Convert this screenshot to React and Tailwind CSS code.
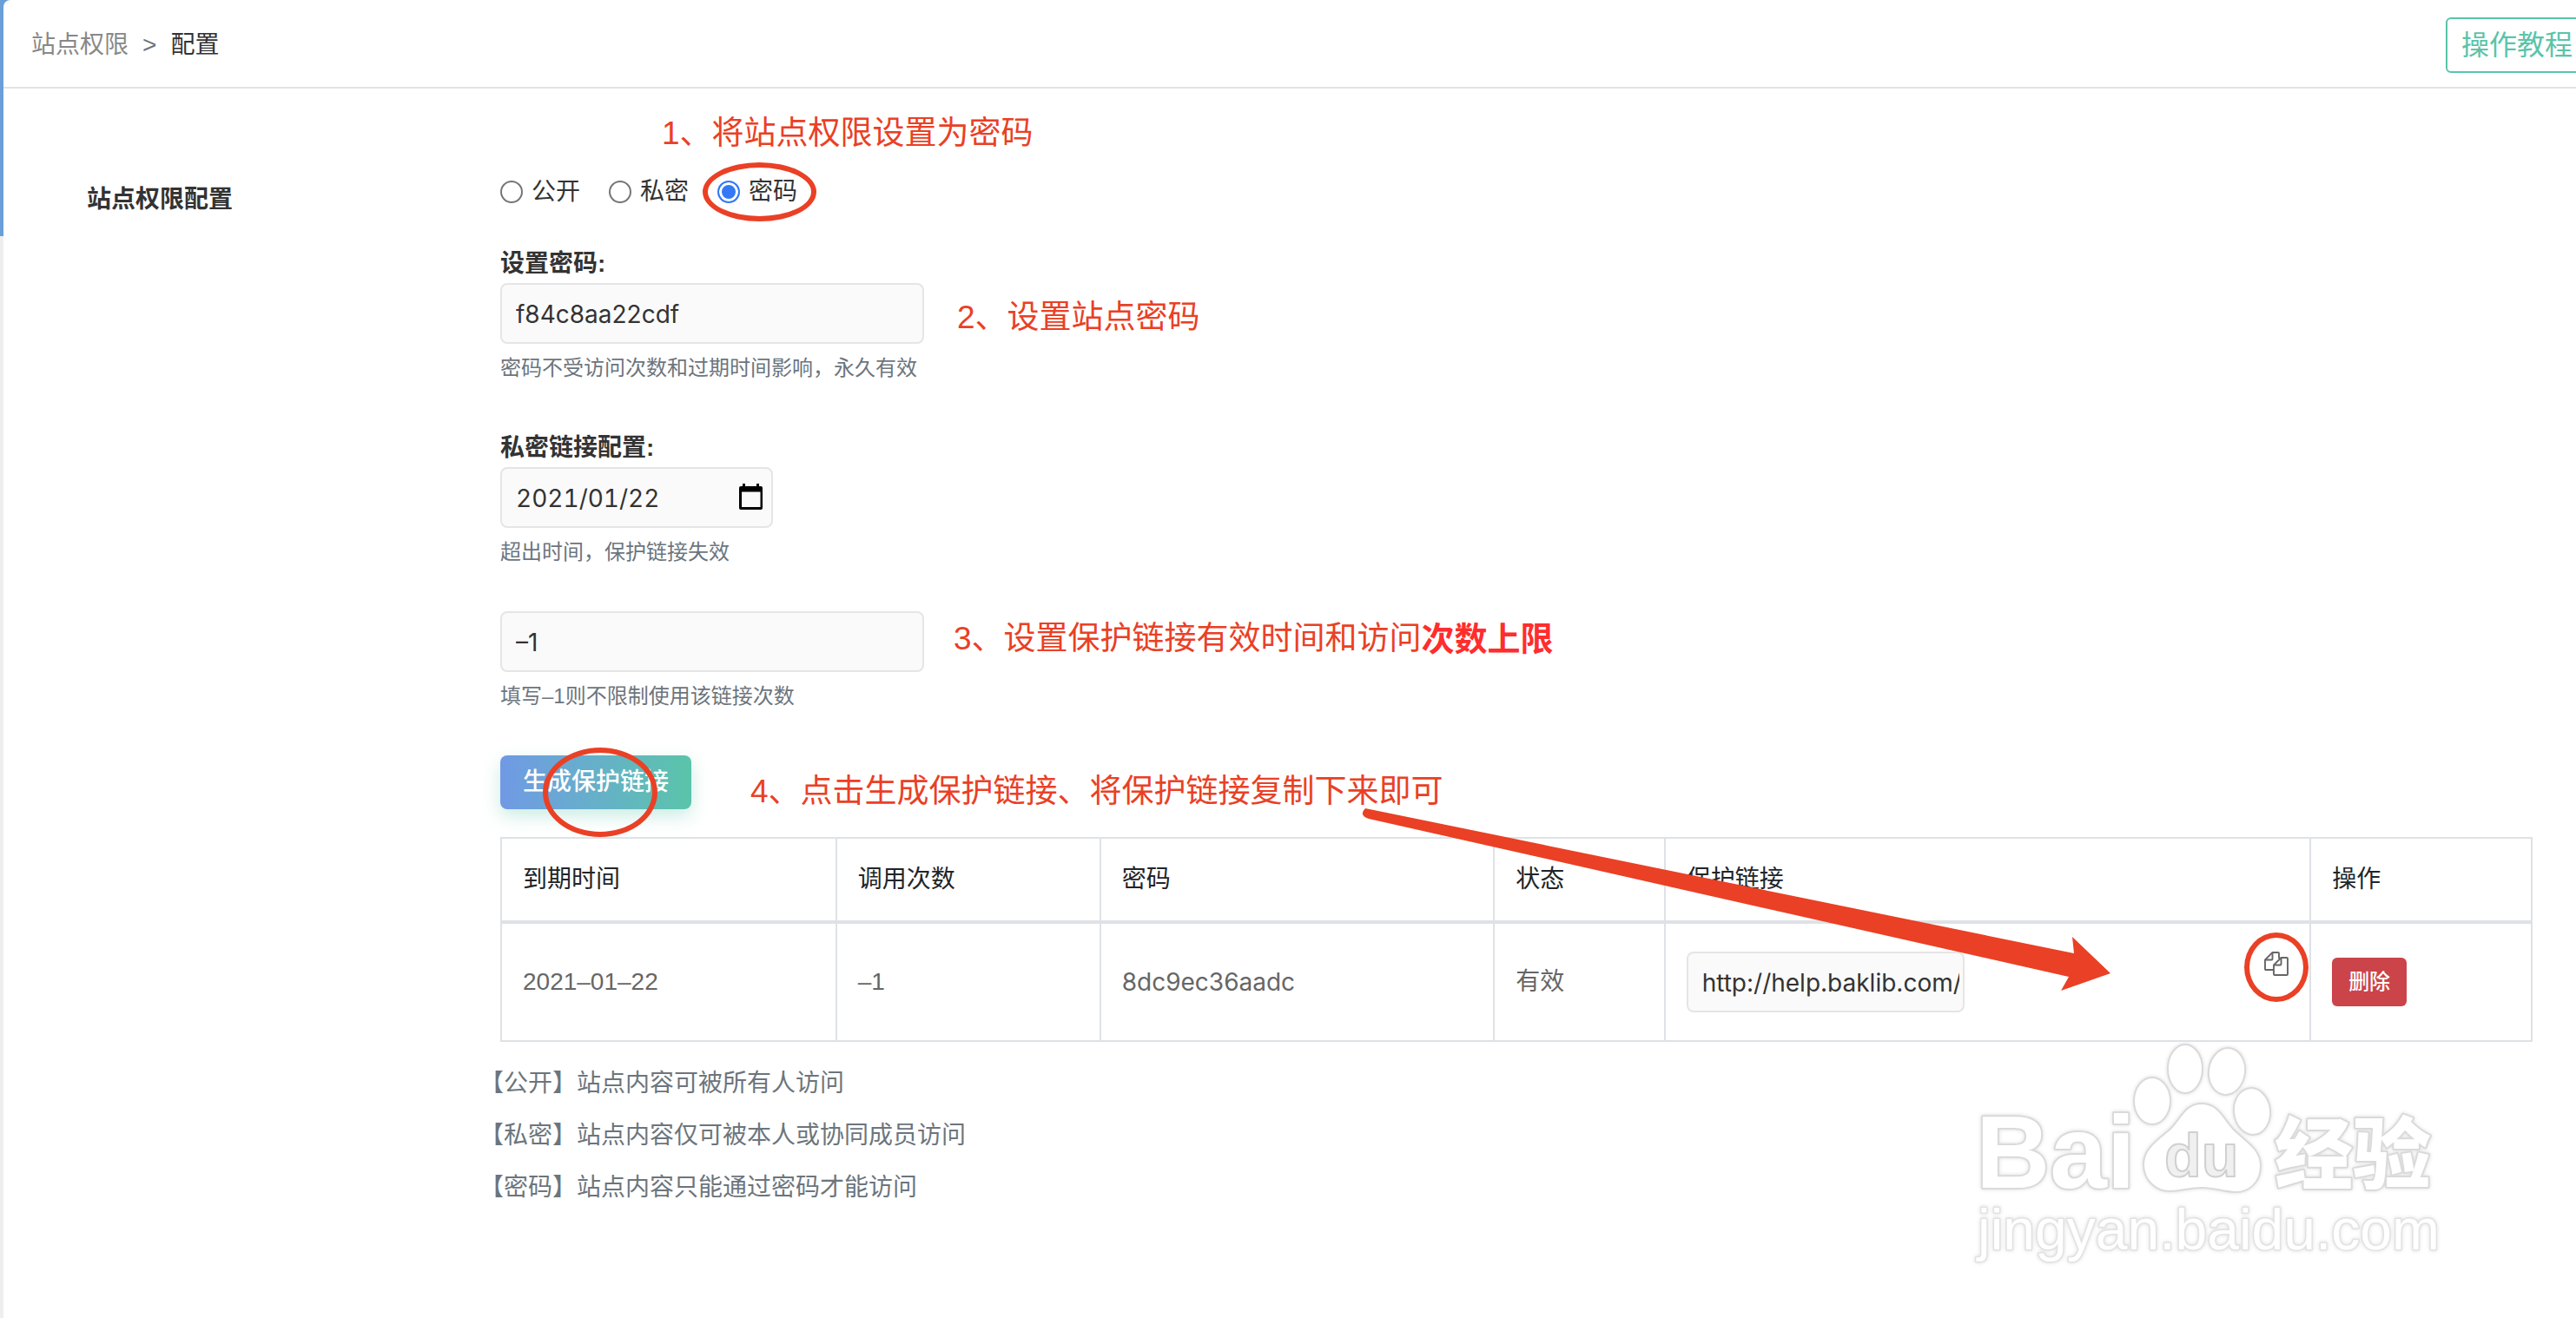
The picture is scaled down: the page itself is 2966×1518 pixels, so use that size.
import { useState } from 'react';

const accessTypes = [
    { value: 'public', name: '公开' },
    { value: 'private', name: '私密' },
    { value: 'password', name: '密码' },
];

const links = [
    {
        expires: '2021–01–22',
        times: '–1',
        password: '8dc9ec36aadc',
        status: '有效',
        url: 'http://help.baklib.com/?auth=8dc9ec36aadc',
    },
];

const notes = [
    '【公开】站点内容可被所有人访问',
    '【私密】站点内容仅可被本人或协同成员访问',
    '【密码】站点内容只能通过密码才能访问',
];

const inputClass =
    "block h-[70px] rounded-lg border-2 border-[#e5e5e5] bg-[#fafafa] pt-0.5 pr-1 pl-4 font-['Inter','Noto_Sans_CJK_SC',sans-serif] text-[28px] text-[#333]";
const labelClass = 'block text-[28px] leading-[44px] font-bold text-[#333]';
const hintClass = 'mt-[10px] text-2xl leading-9 text-[#6c757d]';
const noteTextClass = 'absolute text-[37px] leading-[48px] whitespace-nowrap text-[#ea4025]';
const cellClass = 'border-2 border-[#dee2e6] px-6 text-left font-normal';

function CopyIcon() {
    return (
        <svg width="28" height="28" viewBox="0 0 28 28" fill="none" stroke="#666" strokeWidth="1.9" strokeLinejoin="round">
            <path d="M11 21H2q-1 0-1-1V9.5L9.5 1H16q1 0 1 1v6" />
            <path d="M9.5 1v7.5q0 1-1 1H1" />
            <path d="M19.5 7H26q1 0 1 1v18q0 1-1 1H12q-1 0-1-1V15.500z" />
            <path d="M19.500 7v7.500q0 1-1 1H11" />
        </svg>
    );
}

function CalendarIcon() {
    return (
        <svg width="28" height="30" viewBox="0 0 28 30">
            <path d="M4 0h3v4H4zM20 0h3v4h-3z" />
            <path fillRule="evenodd" d="M2 3h23q2 0 2 2v23q0 2-2 2H2q-2 0-2-2V5q0-2 2-2zM3 9.500V27h21.500V9.500z" />
        </svg>
    );
}

// 点击按钮后指向复制图标的箭头
function Arrow() {
    return (
        <svg className="pointer-events-none absolute top-[931px] left-[1568px]" width="862" height="210" viewBox="1568 931 862 210" fill="#ea4025">
            <path d="M1572 931L2388 1098L2386 1079L2430 1121L2373 1141L2382 1125L1576 943Q1564 939 1572 931Z" />
        </svg>
    );
}

function Watermark() {
    return (
        <svg
            className="pointer-events-none absolute top-[1197px] right-[154px] drop-shadow-[0_0_2px_#ddd]"
            width="542"
            height="270"
            viewBox="2270 1196 542 270"
            fill="#fff"
            stroke="#dadada"
            strokeWidth="2"
            strokeLinejoin="round"
            fontFamily="Liberation Sans, Noto Sans CJK SC, sans-serif"
        >
            <ellipse cx="2478" cy="1267" rx="21" ry="27" />
            <ellipse cx="2516" cy="1230" rx="20" ry="28" />
            <ellipse cx="2564" cy="1233" rx="21" ry="27" transform="rotate(8 2564 1233)" />
            <ellipse cx="2593" cy="1279" rx="21" ry="27" transform="rotate(-6 2593 1279)" />
            <path d="M2535 1270C2555 1270 2560 1288 2572 1300C2586 1314 2603 1322 2603 1342C2603 1360 2590 1373 2572 1372C2558 1371 2550 1367 2535 1367C2520 1367 2512 1371 2498 1371C2482 1371 2468 1358 2468 1340C2468 1322 2484 1312 2498 1300C2511 1288 2515 1270 2535 1270Z" />
            <g strokeWidth="4" paintOrder="stroke" fontWeight="bold">
                <text x="2275" y="1367" fontSize="118">Bai</text>
                <text x="2619" y="1361" fontSize="90" fontWeight="900">经验</text>
            </g>
            <text x="2492" y="1354" fontSize="70" fontWeight="bold" fill="#f0f0f0" stroke="#d0d0d0">du</text>
            <text x="2277" y="1438" fontSize="66" stroke="#e2e2e2" strokeWidth="3" paintOrder="stroke">jingyan.baidu.com</text>
        </svg>
    );
}

function LinkTable() {
    return (
        <table className="mt-8 w-full table-fixed border-collapse text-[28px] leading-[42px]">
            <thead className="text-[#212529]">
                <tr className="h-[97px]">
                    <th className={`${cellClass} w-[16.5%] border-b-4`}>到期时间</th>
                    <th className={`${cellClass} w-[13%] border-b-4`}>调用次数</th>
                    <th className={`${cellClass} w-[19.4%] border-b-4`}>密码</th>
                    <th className={`${cellClass} w-[8.4%] border-b-4`}>状态</th>
                    <th className={`${cellClass} w-[31.8%] border-b-4`}>保护链接</th>
                    <th className={`${cellClass} w-[10.9%] border-b-4`}>操作</th>
                </tr>
            </thead>
            <tbody className="text-[#666]">
                {links.map((link) => (
                    <tr key={link.password} className="h-[137px]">
                        <td className={cellClass}>{link.expires}</td>
                        <td className={cellClass}>{link.times}</td>
                        <td className={`${cellClass} font-['Inter',sans-serif]`}>{link.password}</td>
                        <td className={cellClass}>{link.status}</td>
                        <td className={cellClass}>
                            <div className="flex items-start justify-between">
                                <input className={`${inputClass} w-80`} aria-label="保护链接" readOnly value={link.url} />
                                <button type="button" aria-label="复制" className="relative">
                                    <CopyIcon />
                                    <span className="absolute -top-[22px] -left-[23px] h-20 w-[74px] rounded-[50%] border-6 border-[#ea4025]" />
                                </button>
                            </div>
                        </td>
                        <td className={cellClass}>
                            <button type="button" className="block h-14 rounded-md bg-[#cb444a] px-[19px] text-2xl font-medium text-white">
                                删除
                            </button>
                        </td>
                    </tr>
                ))}
            </tbody>
        </table>
    );
}

export default function App() {
    const [access, setAccess] = useState('password');
    const [password, setPassword] = useState('f84c8aa22cdf');
    const [expires, setExpires] = useState('2021/01/22');
    const [times, setTimes] = useState('–1');

    return (
        <div className="relative min-h-screen overflow-hidden bg-[linear-gradient(#6a9fd8_272px,#eee_272px)] pl-1 font-['Liberation_Sans','Noto_Sans_CJK_SC',sans-serif]">
            <div className="min-h-screen rounded-tl-lg bg-white">
                <header className="flex h-[102px] items-center justify-between border-b-2 border-[#e3e3e3] pt-1 pl-8">
                    <nav className="flex items-center gap-4 text-[28px]">
                        <a href="#" className="text-[#888]">站点权限</a>
                        <span className="text-[#6c757d]">&gt;</span>
                        <span className="text-[#333]">配置</span>
                    </nav>
                    <button type="button" className="-mr-[14px] h-16 shrink-0 rounded-md border-2 border-[#5ac4a9] px-4 text-[32px] text-[#5ac4a9]">
                        操作教程
                    </button>
                </header>

                <main className="flex pr-[50px] pl-24">
                    <h2 className="w-[476px] shrink-0 pt-[107px] text-[28px] leading-[42px] font-bold text-[#333]">站点权限配置</h2>

                    <form className="min-w-0 flex-1 pt-[98px]" onSubmit={(e) => e.preventDefault()}>
                        <div className="relative flex gap-[33px]">
                            {accessTypes.map((type) => (
                                <label key={type.value} className="relative flex items-center gap-[10px] text-[28px] leading-[42px] text-[#333]">
                                    <input
                                        type="radio"
                                        name="access"
                                        value={type.value}
                                        checked={access === type.value}
                                        onChange={() => setAccess(type.value)}
                                        className="size-[26px] appearance-none rounded-full border-2 border-[#767676] bg-white checked:border-[#3478f6] checked:bg-[#3478f6] checked:shadow-[inset_0_0_0_3px_#fff]"
                                    />
                                    {type.name}
                                    {type.value === 'password' && (
                                        <span className="absolute -top-[13px] -left-[17px] h-[68px] w-[131px] rounded-[50%] border-6 border-[#ea4025]" />
                                    )}
                                </label>
                            ))}
                            <p className={`${noteTextClass} -top-[70px] left-[186px]`}>1、将站点权限设置为密码</p>
                        </div>

                        <label htmlFor="password" className={`${labelClass} mt-10`}>设置密码:</label>
                        <div className="relative w-[488px]">
                            <input id="password" className={`${inputClass} w-full`} value={password} onChange={(e) => setPassword(e.target.value)} />
                            <p className={`${noteTextClass} top-[16px] left-[526px]`}>2、设置站点密码</p>
                        </div>
                        <p className={hintClass}>密码不受访问次数和过期时间影响，永久有效</p>

                        <label htmlFor="expires" className={`${labelClass} mt-13`}>私密链接配置:</label>
                        <div className="relative w-[314px]">
                            <input
                                id="expires"
                                className={`${inputClass} w-full tabular-nums`}
                                value={expires}
                                onChange={(e) => setExpires(e.target.value)}
                            />
                            <button type="button" aria-label="选择日期" className="absolute top-[19px] right-[11px]">
                                <CalendarIcon />
                            </button>
                        </div>
                        <p className={hintClass}>超出时间，保护链接失效</p>

                        <div className="relative mt-[50px] w-[488px]">
                            <input aria-label="次数上限" className={`${inputClass} w-full`} value={times} onChange={(e) => setTimes(e.target.value)} />
                            <div className={`${noteTextClass} top-2 left-[522px] flex items-center`}>
                                <span>3、设置保护链接有效时间和访问</span>
                                <b className="text-[38px] text-[#ff2d2d]">次数上限</b>
                            </div>
                        </div>
                        <p className={hintClass}>填写–1则不限制使用该链接次数</p>

                        <div className="relative mt-[50px] w-[220px]">
                            <button
                                type="button"
                                className="block h-[62px] w-full rounded-lg bg-linear-to-r from-[#7099e5] to-[#5ac4a9] text-[28px] font-medium text-white shadow-[0_8px_20px_#5ac4a950]"
                            >
                                生成保护链接
                            </button>
                            <span className="absolute -top-[9px] left-[49px] h-[103px] w-[132px] rounded-[50%] border-6 border-[#ea4025]" />
                            <p className={`${noteTextClass} top-[18px] left-[288px]`}>4、点击生成保护链接、将保护链接复制下来即可</p>
                        </div>

                        <LinkTable />

                        <ul className="mt-[18px] -ml-6 text-[28px] leading-[60px] text-[#6c757d]">
                            {notes.map((note) => (
                                <li key={note}>{note}</li>
                            ))}
                        </ul>
                    </form>
                </main>
            </div>
            <Arrow />
            <Watermark />
        </div>
    );
}
